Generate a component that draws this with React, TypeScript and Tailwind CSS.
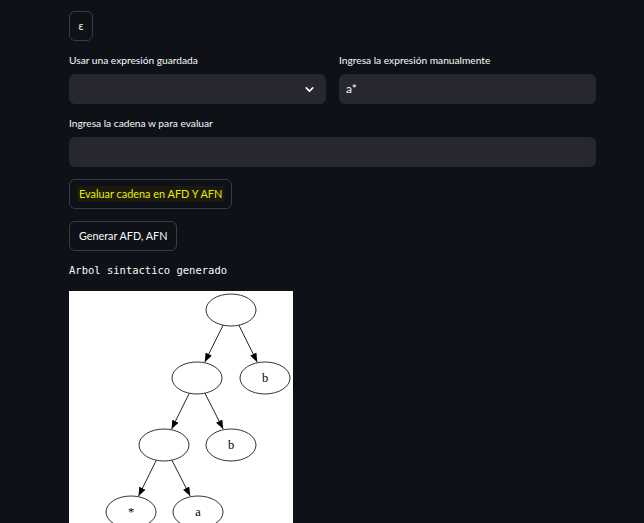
import { ChevronDown } from "lucide-react";

function Label({ text }: { text: string }) {
  return <div className="h-[18px] leading-[18px] text-[10.2px] text-[#fafafa]">{text}</div>;
}

function SyntaxTree() {
  // graphviz-style render of the parse tree
  const nodes = [
    { x: 162, y: 19, t: "" },
    { x: 128, y: 87, t: "" },
    { x: 196, y: 87, t: "b" },
    { x: 95, y: 154, t: "" },
    { x: 162, y: 154, t: "b" },
    { x: 62, y: 221, t: "*" },
    { x: 129, y: 221, t: "a" },
  ];
  const edges = [
    [0, 1],
    [0, 2],
    [1, 3],
    [1, 4],
    [3, 5],
    [3, 6],
  ];
  const rx = 25;
  const ry = 16;
  return (
    <svg width="224" height="240" viewBox="0 0 224 240" className="block">
      <defs>
        <marker id="arr" viewBox="0 0 10 8" refX="10" refY="4" markerWidth="9" markerHeight="7" orient="auto" markerUnits="userSpaceOnUse">
          <path d="M0,0 L10,4 L0,8 z" fill="#000" />
        </marker>
      </defs>
      <rect width="224" height="240" fill="#fff" />
      {edges.map(([a, b], i) => {
        const p = nodes[a];
        const c = nodes[b];
        const dx = c.x - p.x;
        const x1 = p.x + dx * 0.23;
        const y1 = p.y + ry - 1;
        const x2 = c.x - dx * 0.23;
        const y2 = c.y - ry;
        return <line key={i} x1={x1} y1={y1} x2={x2} y2={y2} stroke="#222" strokeWidth="1" markerEnd="url(#arr)" />;
      })}
      {nodes.map((n, i) => (
        <g key={i}>
          <ellipse cx={n.x} cy={n.y} rx={rx} ry={ry} fill="none" stroke="#333" strokeWidth="1" />
          {n.t && (
            <text x={n.x} y={n.y + 4} textAnchor="middle" fontFamily="'Liberation Serif', serif" fontSize="12.5" fill="#000">
              {n.t}
            </text>
          )}
        </g>
      ))}
    </svg>
  );
}

export default function App() {
  return (
    <div className="min-h-screen w-full bg-[#0e1117] text-[#fafafa] overflow-hidden" style={{ fontFamily: "Lato, 'Open Sans', sans-serif" }}>
      <div className="ml-[69px] w-[527px] pt-[11px] flex flex-col items-start">
        <button className="h-[30px] w-[24px] rounded-[6px] border border-[#3a3c43] text-[11px] flex items-center justify-center">ε</button>

        <div className="mt-[10px] w-full grid grid-cols-2 gap-x-[13px]">
          <div className="flex flex-col gap-[5px]">
            <Label text="Usar una expresión guardada" />
            <div className="h-[30px] rounded-[6px] bg-[#262730] flex items-center justify-end pr-[10px]">
              <ChevronDown size={13} strokeWidth={3} className="text-[#fafafa]" />
            </div>
          </div>
          <div className="flex flex-col gap-[5px]">
            <Label text="Ingresa la expresión manualmente" />
            <div className="h-[30px] rounded-[6px] bg-[#262730] flex items-center px-[7px] text-[12px]">a*</div>
          </div>
        </div>

        <div className="mt-[10px] w-full flex flex-col gap-[5px]">
          <Label text="Ingresa la cadena w para evaluar" />
          <div className="h-[30px] rounded-[6px] bg-[#262730]" />
        </div>

        <button className="mt-[12px] h-[30px] px-[7px] rounded-[6px] border border-[#3a3c43] text-[10.9px] flex items-center">
          <span className="bg-[#1a1b0c] text-[#e9ec00] px-[2px]">Evaluar cadena en AFD Y AFN</span>
        </button>

        <button className="mt-[12px] h-[30px] px-[9px] rounded-[6px] border border-[#3a3c43] text-[10.8px] flex items-center">
          Generar AFD, AFN
        </button>

        <div className="mt-[12px] h-[14px] leading-[14px] text-[10.5px]" style={{ fontFamily: "'DejaVu Sans Mono', monospace" }}>
          Arbol sintactico generado
        </div>

        <div className="mt-[14px]">
          <SyntaxTree />
        </div>
      </div>
    </div>
  );
}
